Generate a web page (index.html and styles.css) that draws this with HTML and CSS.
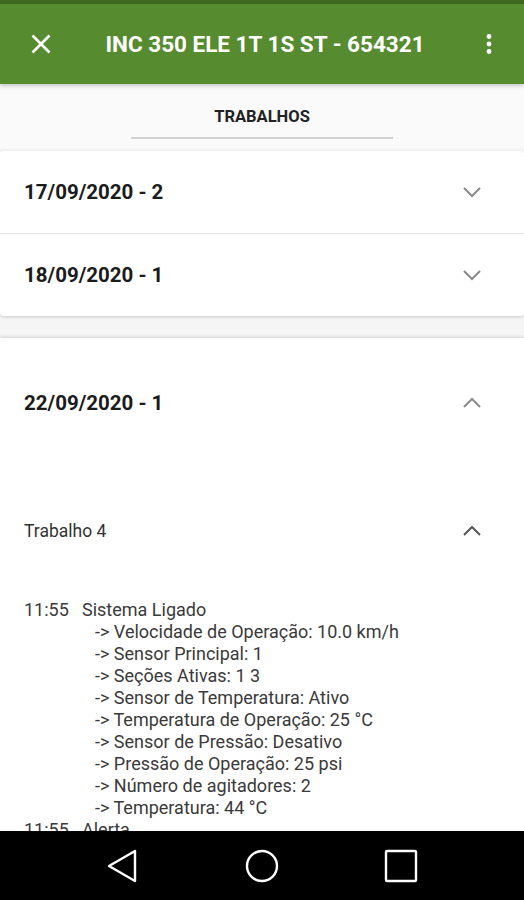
FILE: index.html
```html
<!DOCTYPE html>
<html>
  <head>
    <link rel="stylesheet" href="styles.css">
  </head>
  <body>
    <div class="status-bar"></div>
    <div class="toolbar">
      <svg class="tool-icon" width="24" height="24" viewBox="0 0 24 24">
        <path d="M3.5 3.5 L20.5 20.5 M20.5 3.5 L3.5 20.5" stroke="#fff" stroke-width="2.6" fill="none" />
      </svg>
      <div class="title">INC 350 ELE 1T 1S ST - 654321</div>
      <svg class="tool-icon" width="24" height="24" viewBox="0 0 24 24">
        <circle cx="12" cy="4.5" r="2.4" fill="#fff" />
        <circle cx="12" cy="12" r="2.4" fill="#fff" />
        <circle cx="12" cy="19.5" r="2.4" fill="#fff" />
      </svg>
    </div>

    <div class="tabs">
      <div class="tab">TRABALHOS</div>
      <div class="tab-line"></div>
    </div>

    <div class="content">
      <div class="card-group">
        <div class="day-row">
          <span class="day">17/09/2020 - 2</span>
          <svg class="chev" width="20" height="12" viewBox="0 0 20 12">
            <path d="M2 2 L10 10 L18 2" stroke="#8a8a8a" stroke-width="2" fill="none" />
          </svg>
        </div>
        <div class="day-row">
          <span class="day">18/09/2020 - 1</span>
          <svg class="chev" width="20" height="12" viewBox="0 0 20 12">
            <path d="M2 2 L10 10 L18 2" stroke="#8a8a8a" stroke-width="2" fill="none" />
          </svg>
        </div>
      </div>

      <div class="card-open">
        <div class="day-row open">
          <span class="day">22/09/2020 - 1</span>
          <svg class="chev" width="20" height="12" viewBox="0 0 20 12">
            <path d="M2 10 L10 2 L18 10" stroke="#8a8a8a" stroke-width="2" fill="none" />
          </svg>
        </div>
        <div class="job-row">
          <span class="job">Trabalho 4</span>
          <svg class="chev" width="20" height="12" viewBox="0 0 20 12">
            <path d="M2 10 L10 2 L18 10" stroke="#555" stroke-width="2" fill="none" />
          </svg>
        </div>
        <div class="log">
          <div class="entry">
            <span class="time">11:55</span>
            <div class="entry-body">
              <div>Sistema Ligado</div>
              <div class="detail">-&gt; Velocidade de Operação: 10.0 km/h</div>
              <div class="detail">-&gt; Sensor Principal: 1</div>
              <div class="detail">-&gt; Seções Ativas: 1 3</div>
              <div class="detail">-&gt; Sensor de Temperatura: Ativo</div>
              <div class="detail">-&gt; Temperatura de Operação: 25 °C</div>
              <div class="detail">-&gt; Sensor de Pressão: Desativo</div>
              <div class="detail">-&gt; Pressão de Operação: 25 psi</div>
              <div class="detail">-&gt; Número de agitadores: 2</div>
              <div class="detail">-&gt; Temperatura: 44 °C</div>
            </div>
          </div>
          <div class="entry">
            <span class="time">11:55</span>
            <div class="entry-body">
              <div>Alerta</div>
            </div>
          </div>
        </div>
      </div>
    </div>

    <div class="nav-bar">
      <svg width="34" height="36" viewBox="0 0 34 36">
        <path d="M29 3 L29 33 L3 18 Z" stroke="#fff" stroke-width="2.4" fill="none" stroke-linejoin="round" />
      </svg>
      <svg width="34" height="34" viewBox="0 0 34 34">
        <circle cx="17" cy="17" r="15" stroke="#fff" stroke-width="2.4" fill="none" />
      </svg>
      <svg width="34" height="34" viewBox="0 0 34 34">
        <rect x="2" y="2" width="30" height="30" rx="1" stroke="#fff" stroke-width="2.4" fill="none" />
      </svg>
    </div>
  </body>
</html>
```

FILE: styles.css
```css
body {
  margin: 0;
  width: 524px;
  height: 900px;
  overflow: hidden;
  position: relative;
  font-family: Roboto, "Liberation Sans", sans-serif;
  background-color: #f5f5f5;
  color: #222;
}

.status-bar {
  height: 4px;
  background-color: #3e6a22;
}

.toolbar {
  height: 80px;
  background-color: #568b2f;
  display: flex;
  align-items: center;
  padding: 0 23px 0 29px;
  box-shadow: 0 2px 4px rgba(0, 0, 0, 0.2);
  position: relative;
  z-index: 2;
}

.title {
  flex: 1;
  text-align: center;
  color: #fff;
  font-size: 22.5px;
  font-weight: bold;
}

.tabs {
  height: 64px;
  background-color: #fafafa;
  display: flex;
  flex-direction: column;
  align-items: center;
}

.tab {
  margin-top: 23px;
  font-size: 16.5px;
  font-weight: bold;
  color: #222;
}

.tab-line {
  margin-top: 11px;
  width: 262px;
  height: 2px;
  background-color: #d0d0d0;
}

.content {
  padding-top: 3px;
}

.card-group {
  background-color: #fff;
  border-radius: 3px;
  box-shadow: 0 1px 3px rgba(0, 0, 0, 0.18);
}

.day-row {
  height: 82px;
  display: flex;
  align-items: center;
  justify-content: space-between;
  padding: 0 42px 0 24px;
}

.card-group .day-row + .day-row {
  border-top: 1px solid #e4e4e4;
}

.day {
  font-size: 20.5px;
  font-weight: bold;
  color: #1b1b1b;
}

.card-open {
  margin-top: 22px;
  background-color: #fff;
  box-shadow: 0 -1px 3px rgba(0, 0, 0, 0.15);
  height: 600px;
}

.day-row.open {
  height: 130px;
}

.job-row {
  height: 126px;
  display: flex;
  align-items: center;
  justify-content: space-between;
  padding: 0 42px 0 24px;
}

.job {
  font-size: 17.5px;
  color: #333;
}

.log {
  padding: 0 24px;
  font-size: 18px;
  line-height: 22px;
  color: #3a3a3a;
  margin-top: 5px;
}

.entry {
  display: flex;
}

.time {
  width: 58px;
}

.detail {
  padding-left: 13px;
}

.nav-bar {
  position: absolute;
  left: 0;
  right: 0;
  bottom: 0;
  height: 69px;
  background-color: #000;
  display: flex;
  justify-content: center;
  align-items: center;
  gap: 105px;
}
```
